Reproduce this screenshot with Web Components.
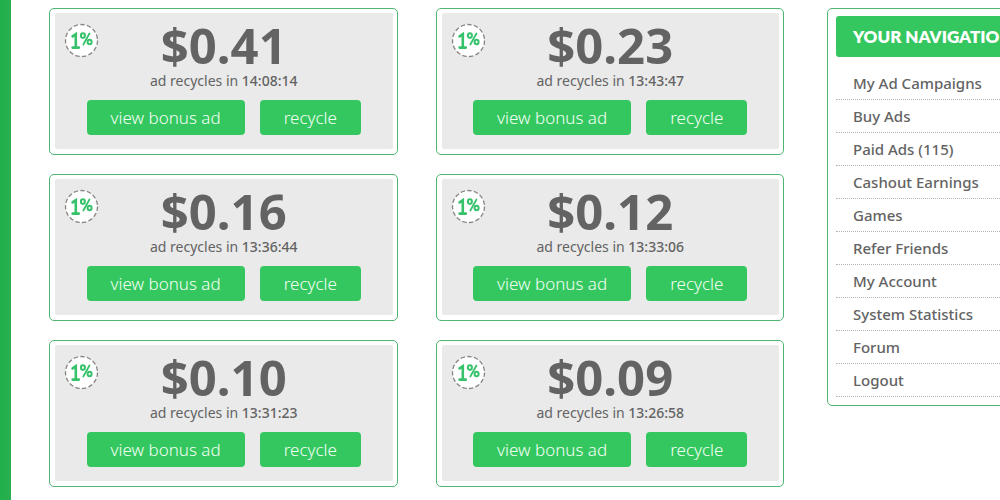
<!DOCTYPE html>
<html lang="en">
<head>
<meta charset="utf-8">
<title>Bonus Ads</title>
<style>
body{margin:0;background:#fff;color:#636363;font-family:"Noto Sans","Open Sans",sans-serif}
</style>
</head>
<body>
<app-shell>
  <ad-grid slot="main">
    <ad-card price="$0.41" time="14:08:14"></ad-card>
    <ad-card price="$0.23" time="13:43:47"></ad-card>
    <ad-card price="$0.16" time="13:36:44"></ad-card>
    <ad-card price="$0.12" time="13:33:06"></ad-card>
    <ad-card price="$0.10" time="13:31:23"></ad-card>
    <ad-card price="$0.09" time="13:26:58"></ad-card>
  </ad-grid>
  <side-nav slot="side" heading="YOUR NAVIGATION">
    <nav-item>My Ad Campaigns</nav-item>
    <nav-item>Buy Ads</nav-item>
    <nav-item>Paid Ads (115)</nav-item>
    <nav-item>Cashout Earnings</nav-item>
    <nav-item>Games</nav-item>
    <nav-item>Refer Friends</nav-item>
    <nav-item>My Account</nav-item>
    <nav-item>System Statistics</nav-item>
    <nav-item>Forum</nav-item>
    <nav-item>Logout</nav-item>
  </side-nav>
</app-shell>
<script>
const define = (name, html, setup) => customElements.define(name, class extends HTMLElement {
  constructor() {
    super();
    this.attachShadow({ mode: 'open' }).innerHTML = html;
  }
  connectedCallback() { if (setup) setup(this, this.shadowRoot); }
});

define('app-shell', `
<style>
:host{display:flex;align-items:stretch;min-height:100vh;overflow-x:clip}
.edge{flex:none;width:11px;background:linear-gradient(90deg,#1fb14a,#2bae50)}
.page{flex:1;min-width:0;display:flex;align-items:flex-start;gap:43px;padding:8px 0 8px 38px}
main{flex:1;min-width:0}
aside{flex:none;width:250px;margin-right:-77px}
</style>
<div class="edge"></div>
<div class="page"><main><slot name="main"></slot></main><aside><slot name="side"></slot></aside></div>`);

define('ad-grid', `
<style>
:host{display:grid;grid-template-columns:1fr 1fr;gap:19px 38px}
</style>
<slot></slot>`);

define('ad-card', `
<style>
:host{display:block;border:1px solid #4fb673;border-radius:5px;padding:4px 4px 5px 5px}
.panel{position:relative;background:#eaeaea;border-radius:2px;padding:4px 0 14px;text-align:center}
.price{margin:0;font-size:49px;line-height:56px;font-weight:700;color:#636363}
.left{margin:0;font-size:14px;line-height:16px}
.left time{font-weight:500}
.actions{display:flex;justify-content:center;gap:15px;margin-top:11px}
button{font:350 17px/24px "Noto Sans","Open Sans",sans-serif;color:#f2fff5;background:#35c75f;border:0;border-radius:4px;padding:6px 24px 5px;cursor:pointer}
svg{position:absolute;left:9px;top:10px;width:35px;height:35px}
</style>
<section class="panel">
  <svg viewBox="0 0 35 35" role="img" aria-label="One percent">
    <circle cx="17.5" cy="17.5" r="16" fill="#fff" stroke="#8a8480" stroke-width="1.3" stroke-dasharray="4.4 2.3"/>
    <g fill="none" stroke="#35c26a" stroke-width="2.6" stroke-linecap="round">
      <path d="M8.6 13.4 11.8 11.2V24.4M8.6 24.6H14.8"/>
      <path d="M25.4 10.6 19.4 21.4" stroke-width="1.9"/>
      <ellipse cx="18.9" cy="12.6" rx="2" ry="2.3" stroke-width="2"/>
      <ellipse cx="25.6" cy="19" rx="2" ry="2.3" stroke-width="2"/>
    </g>
  </svg>
  <p class="price"></p>
  <p class="left">ad recycles in <time></time></p>
  <div class="actions"><button type="button">view bonus ad</button><button type="button">recycle</button></div>
</section>`, (el, root) => {
  root.querySelector('.price').textContent = el.getAttribute('price');
  root.querySelector('time').textContent = el.getAttribute('time');
});

define('side-nav', `
<style>
:host{display:block;border:1px solid #4fb673;border-radius:5px;padding:7px 8px 8px}
h2{margin:0 0 10px;padding:0 17px;background:#35c75f;border-radius:3px;color:#fff;font:800 17px/41px Lato,"Open Sans",sans-serif;white-space:nowrap}
nav{display:block}
</style>
<h2></h2><nav><slot></slot></nav>`, (el, root) => {
  root.querySelector('h2').textContent = el.getAttribute('heading');
});

define('nav-item', `
<style>
:host{display:block;border-bottom:1px dotted #b4b4b4}
a{display:block;padding:0 17px;font-size:15px;line-height:32px;font-weight:500;color:#636363;text-decoration:none}
</style>
<a href="#"><slot></slot></a>`);
</script>
</body>
</html>
